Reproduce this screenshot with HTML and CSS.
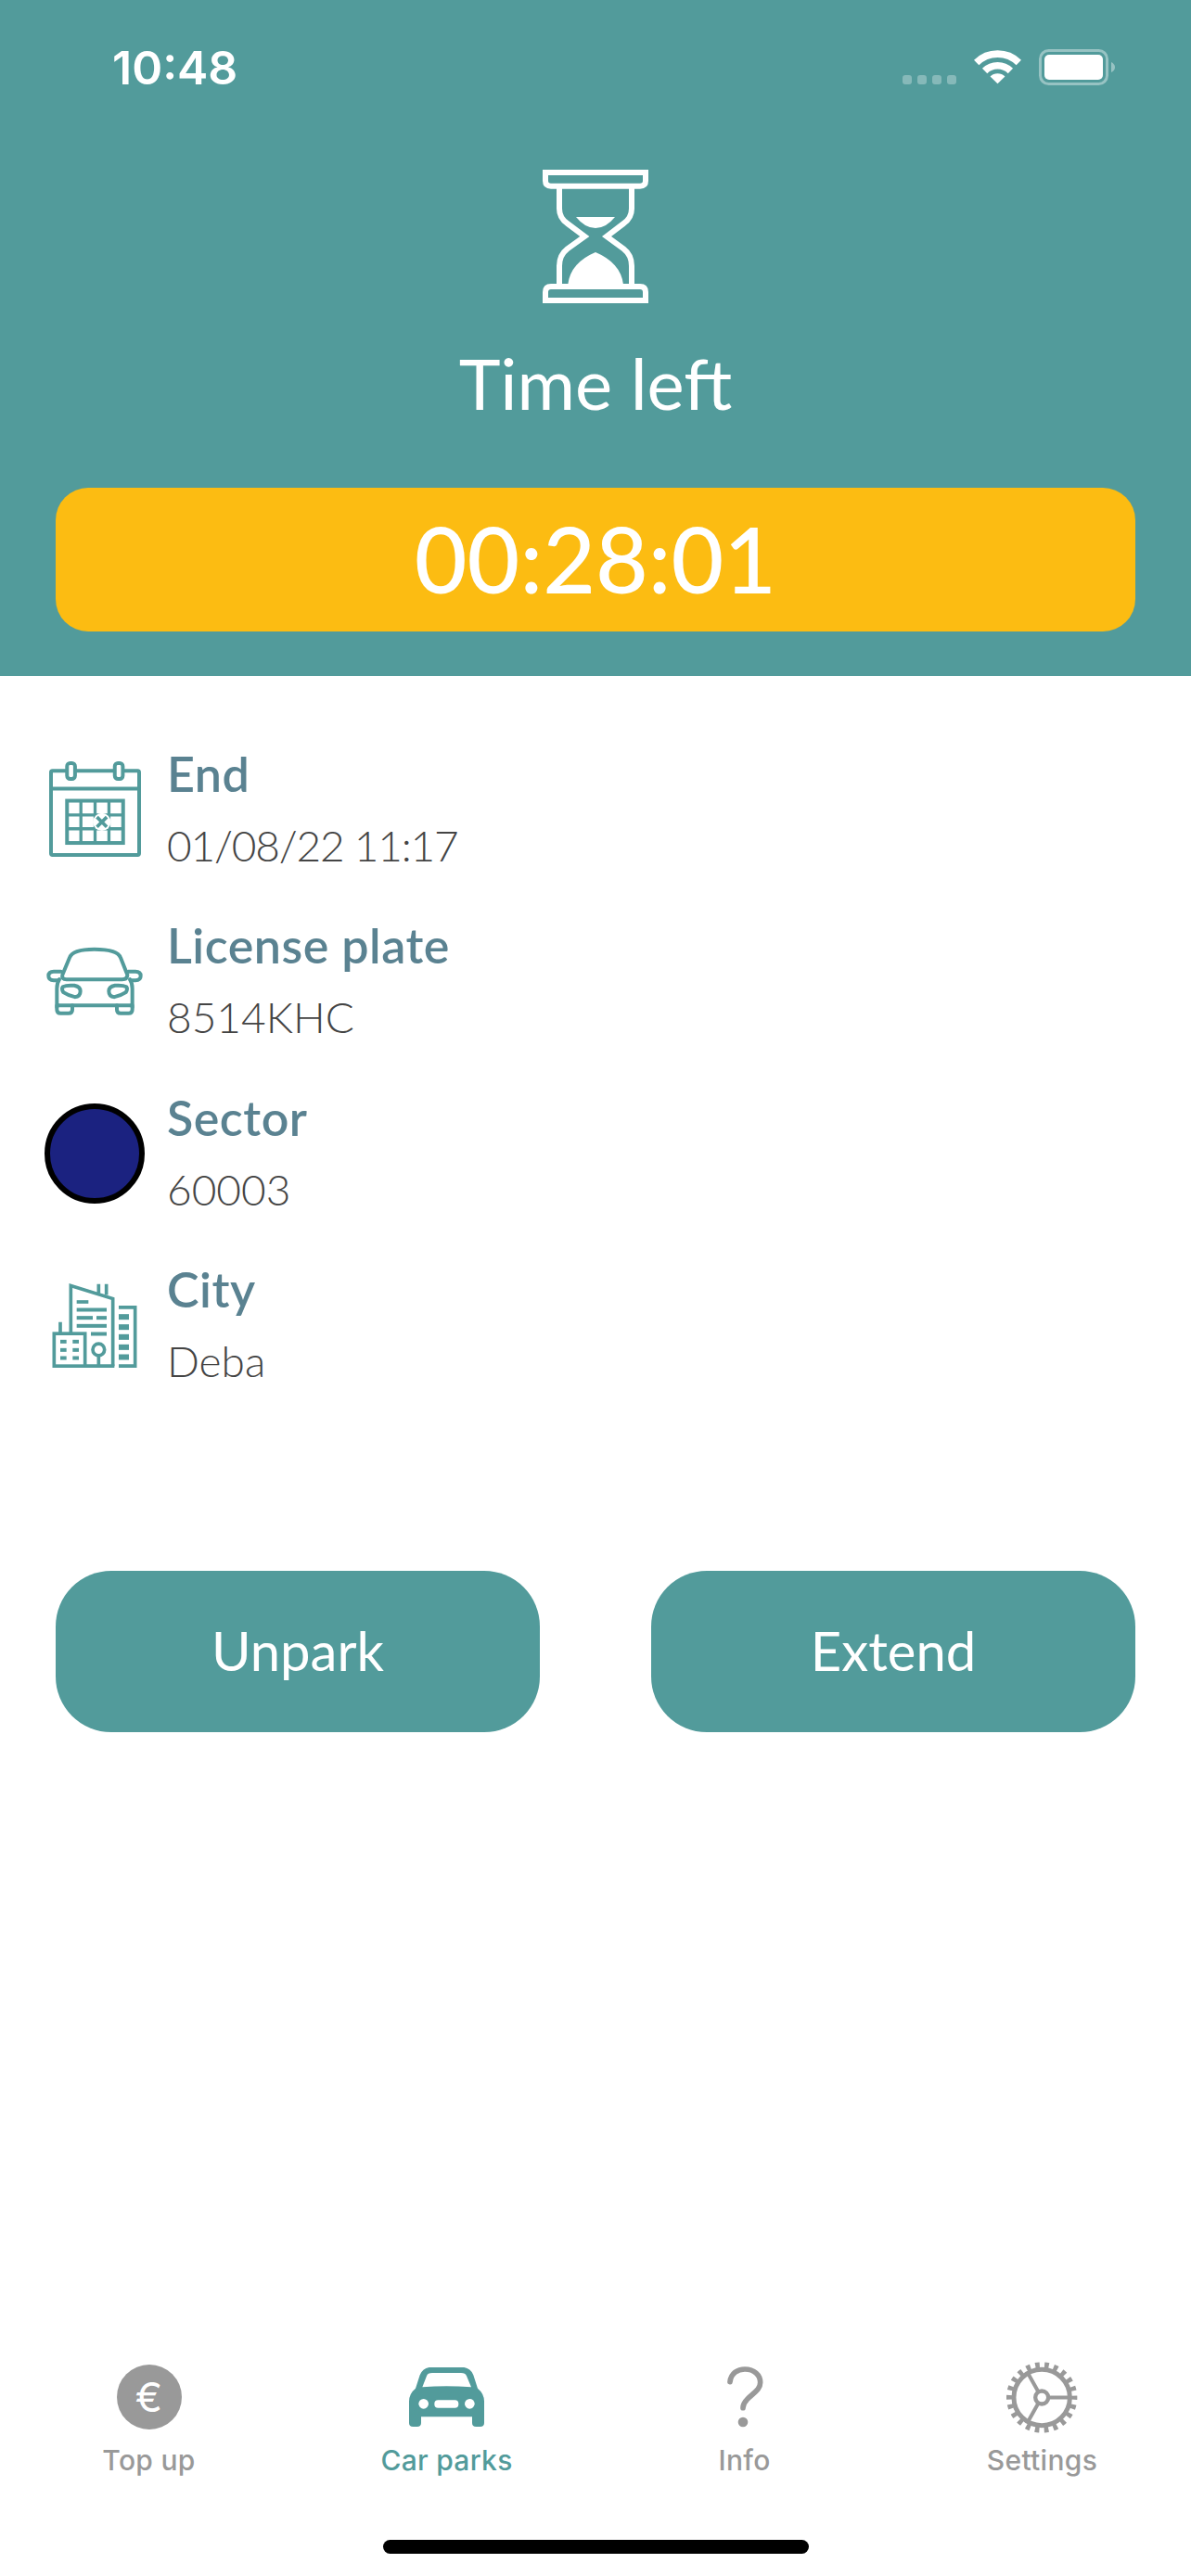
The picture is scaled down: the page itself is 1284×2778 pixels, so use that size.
FILE: index.html
```html
<!DOCTYPE html>
<html lang="en">
<head>
    <meta charset="UTF-8">
    <meta name="viewport" content="width=device-width, initial-scale=1.0">
    <title>Time left</title>
    <link rel="stylesheet" href="styles.css">
</head>
<body>
    <!-- Header -->
    <header class="top">
        <div class="status-bar">
            <span class="clock">10:48</span>
            <div class="status-icons">
                <div class="signal"><span></span><span></span><span></span><span></span></div>
                <svg class="wifi" viewBox="270 42 152 112">
                    <path d="M277 83A98 98 0 0 1 415 83M304 110A60 60 0 0 1 388 110" fill="none" stroke="#fff" stroke-width="23"/>
                    <path d="M346 152L322 128A34 34 0 0 1 370 128Z" fill="#fff"/>
                </svg>
                <svg class="battery" viewBox="0 0 82 39">
                    <rect x="1.5" y="1.5" width="72" height="36" rx="9" fill="none" stroke="#fff" stroke-opacity="0.4" stroke-width="3"/>
                    <rect x="6" y="6" width="63" height="27" rx="5" fill="#fff"/>
                    <path d="M78 14Q82 16 82 19.500Q82 23 78 25Z" fill="#fff" fill-opacity="0.4"/>
                </svg>
            </div>
        </div>
        <svg class="hourglass" viewBox="195 69 342 432">
            <g fill="none" stroke="#fff" stroke-width="18">
                <path d="M204 78H528V105Q528 122 510 122H222Q204 122 204 105Z"/>
                <path d="M204 492H528V465Q528 447 510 447H222Q204 447 204 465Z"/>
                <path d="M249 122V195Q249 225 275 243L331 285L275 325Q249 345 249 380V447"/>
                <path d="M483 122V195Q483 225 457 243L402 285L457 325Q483 345 483 380V447"/>
            </g>
            <path d="M303 222H429Q400 258 366 258Q332 258 303 222Z" fill="#fff"/>
            <path d="M277 440Q285 370 366 336Q447 370 456 440Z" fill="#fff"/>
        </svg>
        <div class="title">Time left</div>
        <div class="countdown">00:28:01</div>
    </header>

    <!-- Parking details -->
    <main class="details">
        <div class="row">
            <div class="row-icon">
                <svg class="cal-icon" viewBox="64 88 304 313">
                    <g fill="none" stroke="#529b9b" stroke-width="12">
                        <rect x="73" y="119" width="286" height="273" rx="5"/>
                        <path d="M73 177H359"/>
                        <rect x="125" y="94" width="26" height="51" rx="10" fill="#fff"/>
                        <rect x="280" y="94" width="26" height="51" rx="10" fill="#fff"/>
                        <rect x="125" y="216" width="182" height="137"/>
                        <path d="M170 216V353M216 216V353M261 216V353M125 262H307M125 307H307" stroke-width="10"/>
                    </g>
                    <circle cx="238" cy="285" r="29" fill="#fff"/>
                    <path d="M222 269L254 301M254 269L222 301" stroke="#529b9b" stroke-width="11" fill="none"/>
                </svg>
            </div>
            <div class="row-text">
                <div class="label">End</div>
                <div class="value date">01/08/22 11:17</div>
            </div>
        </div>
        <div class="row">
            <div class="row-icon">
                <svg class="car-icon" viewBox="60 695 312 224">
                    <g fill="none" stroke="#529b9b" stroke-width="12" stroke-linejoin="round" stroke-linecap="round">
                        <path d="M112 785L135 730Q145 703 215 703Q290 703 300 730L322 785Q322 800 305 800H125Q108 800 112 785Z"/>
                        <path d="M107 775H84Q67 775 67 789Q67 803 84 803H100"/>
                        <path d="M325 775H348Q365 775 365 789Q365 803 348 803H332"/>
                        <path d="M102 800Q94 812 94 830V890Q94 884 100 884H332Q338 884 338 890V830Q338 812 330 800"/>
                        <path d="M94 884V898Q94 910 106 910H132Q144 910 144 898V884"/>
                        <path d="M288 884V898Q288 910 300 910H326Q338 910 338 898V884"/>
                        <path d="M113 824Q125 818 150 820Q170 824 170 838Q170 856 152 857Q130 852 115 842Q108 830 113 824Z"/>
                        <path d="M319 824Q307 818 282 820Q262 824 262 838Q262 856 280 857Q302 852 317 842Q324 830 319 824Z"/>
                    </g>
                </svg>
            </div>
            <div class="row-text">
                <div class="label">License plate</div>
                <div class="value">8514KHC</div>
            </div>
        </div>
        <div class="row">
            <div class="row-icon">
                <div class="sector-dot"></div>
            </div>
            <div class="row-text">
                <div class="label">Sector</div>
                <div class="value">60003</div>
            </div>
        </div>
        <div class="row">
            <div class="row-icon">
                <svg class="city-icon" viewBox="78 640 276 278">
                    <g fill="none" stroke="#529b9b" stroke-width="11">
                        <path d="M139 805V650L275 692V910"/>
                        <path d="M229 645V675M254 645V680M105 768V805"/>
                        <rect x="85" y="805" width="100" height="105"/>
                        <path d="M185 910H280"/>
                        <path d="M294 720H347V910H294"/>
                        <circle cx="229" cy="857" r="19"/>
                        <path d="M229 876V910"/>
                    </g>
                    <g fill="#529b9b">
                        <rect x="158" y="697" width="38" height="11"/>
                        <rect x="158" y="722" width="97" height="12"/>
                        <rect x="158" y="748" width="52" height="12"/>
                        <rect x="222" y="748" width="33" height="12"/>
                        <rect x="158" y="774" width="97" height="12"/>
                        <rect x="204" y="800" width="51" height="12"/>
                        <rect x="294" y="742" width="33" height="18"/>
                        <rect x="294" y="775" width="33" height="18"/>
                        <rect x="294" y="807" width="33" height="18"/>
                        <rect x="294" y="840" width="33" height="18"/>
                        <rect x="294" y="872" width="33" height="18"/>
                        <rect x="105" y="825" width="20" height="12"/>
                        <rect x="145" y="825" width="20" height="12"/>
                        <rect x="105" y="852" width="20" height="12"/>
                        <rect x="145" y="852" width="20" height="12"/>
                        <rect x="105" y="878" width="20" height="12"/>
                        <rect x="145" y="878" width="20" height="12"/>
                    </g>
                </svg>
            </div>
            <div class="row-text">
                <div class="label">City</div>
                <div class="value">Deba</div>
            </div>
        </div>
    </main>

    <!-- Buttons -->
    <div class="actions">
        <button class="action-btn">Unpark</button>
        <button class="action-btn">Extend</button>
    </div>

    <!-- Tab bar -->
    <footer class="tabbar">
        <div class="tabs">
            <div class="tab">
                <div class="tab-icon"><div class="euro"><span>€</span></div></div>
                <div class="tab-label">Top up</div>
            </div>
            <div class="tab active">
                <div class="tab-icon">
                    <svg class="tab-car" viewBox="1080 100 243 192">
                        <path d="M1145 100H1258Q1280 104 1288 125L1302 168Q1323 185 1323 210V280Q1323 292 1310 292H1297Q1284 292 1284 280V260H1119V280Q1119 292 1106 292H1093Q1080 292 1080 280V210Q1080 185 1101 168L1115 125Q1123 104 1145 100Z" fill="#529b9b"/>
                        <path d="M1123 164L1137 128Q1140 118 1155 118H1248Q1262 118 1266 128L1281 164Q1200 158 1123 164Z" fill="#fff"/>
                        <circle cx="1127" cy="218" r="16" fill="#fff"/>
                        <circle cx="1276" cy="218" r="16" fill="#fff"/>
                        <rect x="1162" y="206" width="78" height="25" rx="12" fill="#fff"/>
                    </svg>
                </div>
                <div class="tab-label">Car parks</div>
            </div>
            <div class="tab">
                <div class="tab-icon">
                    <svg class="tab-help" viewBox="185 98 120 198">
                        <path d="M197 148C200 120 222 107 245 107C275 107 295 125 295 150C295 175 270 185 252 205C242 215 239 222 239 232" fill="none" stroke="#999" stroke-width="17" stroke-linecap="round"/>
                        <circle cx="239" cy="278" r="16" fill="#999"/>
                    </svg>
                </div>
                <div class="tab-label">Info</div>
            </div>
            <div class="tab">
                <div class="tab-icon">
                    <svg class="tab-gear" viewBox="1092 80 232 230">
                        <g fill="none" stroke="#999">
                            <circle cx="1207" cy="195" r="91" stroke-width="15"/>
                            <circle cx="1207" cy="195" r="105" stroke-width="20" stroke-dasharray="14 15.990" stroke-dashoffset="7"/>
                            <circle cx="1207" cy="195" r="21" stroke-width="13"/>
                            <path d="M1228 195H1295M1196 177L1160 113M1196 213L1160 277" stroke-width="12"/>
                        </g>
                    </svg>
                </div>
                <div class="tab-label">Settings</div>
            </div>
        </div>
        <div class="home-indicator"></div>
    </footer>
</body>
</html>
```

FILE: styles.css
```css
/* Page */
body {
    margin: 0;
    min-height: 2778px;
    display: flex;
    flex-direction: column;
    background-color: #fff;
    font-family: Lato, "Noto Sans", sans-serif;
    color: #444;
}

/* Header */
.top {
    display: flex;
    flex-direction: column;
    align-items: center;
    padding: 53px 60px 48px;
    background-color: #529b9b;
    color: #fff;
}

.status-bar {
    align-self: stretch;
    display: flex;
    justify-content: space-between;
    align-items: center;
    height: 39px;
    padding: 0 22px 0 61px;
}

.clock {
    margin-top: 2px;
    font-family: Inter, sans-serif;
    font-size: 50px;
    font-weight: 600;
    line-height: 39px;
}

.status-icons {
    display: flex;
    align-items: flex-end;
    height: 39px;
}

.signal {
    display: flex;
    gap: 6px;
    margin-bottom: 1px;
    margin-right: 19px;
}

.signal span {
    width: 10px;
    height: 10px;
    border-radius: 3px;
    background-color: rgba(255, 255, 255, 0.3);
}

.wifi {
    width: 51px;
    height: 37px;
    margin-bottom: 1px;
    margin-right: 19px;
}

.battery {
    width: 82px;
    height: 39px;
}

.hourglass {
    width: 114px;
    height: 144px;
    margin-top: 91px;
}

.title {
    margin-top: 46px;
    margin-bottom: 2px;
    font-size: 76px;
    line-height: 80px;
}

.countdown {
    align-self: stretch;
    margin-top: 71px;
    height: 155px;
    border-radius: 35px;
    background-color: #fcbc12;
    font-size: 98px;
    font-weight: 500;
    line-height: 153px;
    text-align: center;
}

/* Detail rows */
.details {
    padding: 51px 48px 0;
}

.row {
    display: flex;
    align-items: center;
    gap: 24px;
    height: 185.5px;
}

.row-icon {
    width: 108px;
    display: flex;
    justify-content: center;
    align-items: center;
}

.cal-icon {
    width: 101px;
    height: 104px;
}

.car-icon {
    width: 104px;
    height: 75px;
}

.city-icon {
    width: 92px;
    height: 93px;
}

.sector-dot {
    box-sizing: border-box;
    width: 108px;
    height: 108px;
    border: 6px solid #000;
    border-radius: 50%;
    background-color: #1b2280;
}

.label {
    margin-bottom: 2px;
    font-size: 52px;
    font-weight: 600;
    line-height: 76px;
    letter-spacing: 0.5px;
    color: #5a8291;
}

.value {
    font-size: 46px;
    font-weight: 300;
    line-height: 76px;
    color: #444;
}

.date {
    letter-spacing: -1.2px;
}

/* Buttons */
.actions {
    display: flex;
    gap: 120px;
    margin-top: 172px;
    padding: 0 60px;
}

.action-btn {
    flex: 1;
    height: 174px;
    padding: 0 0 4px;
    border: none;
    border-radius: 60px;
    background-color: #529b9b;
    color: #fff;
    font-family: inherit;
    font-size: 58px;
}

/* Tab bar */
.tabbar {
    margin-top: auto;
    padding-bottom: 24px;
}

.tabs {
    display: grid;
    grid-template-columns: repeat(4, 1fr);
}

.tab {
    display: flex;
    flex-direction: column;
    align-items: center;
    color: #999;
}

.tab.active {
    color: #529b9b;
}

.tab-icon {
    height: 78px;
    display: flex;
    align-items: center;
    justify-content: center;
}

.tab-label {
    margin-top: 9px;
    font-family: Inter, sans-serif;
    font-size: 30px;
    font-weight: 500;
    line-height: 40px;
    letter-spacing: 0.3px;
}

.euro {
    width: 70px;
    height: 70px;
    border-radius: 50%;
    background-color: #999;
    color: #fff;
    display: flex;
    align-items: center;
    justify-content: center;
    font-family: Inter, sans-serif;
    font-size: 44px;
}

.tab-car {
    width: 81px;
    height: 64px;
}

.tab-help {
    width: 40px;
    height: 66px;
}

.tab-gear {
    width: 77px;
    height: 77px;
}

.home-indicator {
    width: 459px;
    height: 15px;
    margin: 66px auto 0;
    border-radius: 8px;
    background-color: #000;
}
```
